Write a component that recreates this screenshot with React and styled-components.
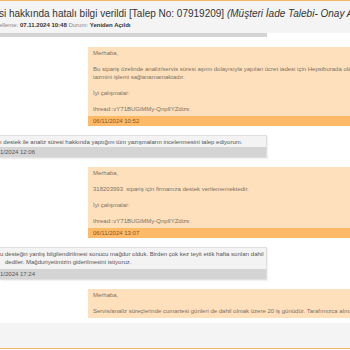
import React from "react";
import styled, { createGlobalStyle } from "styled-components";

const GlobalStyle = createGlobalStyle`
  html, body {
    margin: 0;
    padding: 0;
    background: #fff;
    overflow: hidden;
  }
  body {
    font-family: "Liberation Sans", Arial, sans-serif;
  }
`;

const Modal = styled.div`
  width: 350px;
  height: 347px;
  display: flex;
  flex-direction: column;
  border-top: 1px solid #f2b766;
  border-bottom: 1px solid #f2b766;
  overflow: hidden;
`;

const Header = styled.div`
  height: 31px;
  flex: none;
  background: #f4f4f4;
  padding-top: 7px;
  box-sizing: border-box;
  white-space: nowrap;
  position: relative;
  z-index: 2;
  box-shadow: 0 1px 1px rgba(0, 0, 0, 0.04);
`;

const Title = styled.div`
  font-size: 10px;
  line-height: 12px;
  color: #333;
  margin-left: -1px;

  em {
    font-style: italic;
  }
`;

const Meta = styled.div`
  font-size: 6px;
  line-height: 8px;
  color: #888;
  margin-top: 1px;
  margin-left: -1px;

  b {
    color: #333;
    font-weight: bold;
  }
`;

const Body = styled.div`
  flex: 1;
  overflow: hidden;
  background: #fff;
  display: flex;
  flex-direction: column;
  gap: 9px;
`;

const Tail = styled.div`
  width: 267px;
  height: 4px;
  background: #d4d4d4;
  margin-top: 1px;
  margin-bottom: 1px;
  flex: none;
`;

const Bubble = styled.div`
  flex: none;
  box-sizing: border-box;
  white-space: nowrap;
  font-size: 6px;
  line-height: 8px;
  ${({ $mine }) =>
    $mine
      ? `
    margin-left: 88px;
    width: 420px;
    background: #ffe0bd;
    color: #7d7160;
    padding-top: 2px;
  `
      : `
    width: 267px;
    background: #f3f3f3;
    color: #555;
    border: 1px solid #e0e0e0;
    border-left: none;
    padding-top: 2px;
    box-shadow: 1px 1px 1px rgba(0, 0, 0, 0.05);
  `}
`;

const Para = styled.p`
  margin: 0 0 8px;
  padding-left: ${({ $indent }) => $indent ?? 5}px;

  &:last-of-type {
    margin-bottom: 3px;
  }
`;

const Line = styled.div`
  padding-left: ${({ $indent }) => $indent ?? 5}px;
`;

const Stamp = styled.div`
  height: 10px;
  line-height: 10px;
  font-size: 6px;
  padding-left: ${({ $indent }) => $indent ?? 5}px;
  background: ${({ $mine }) => ($mine ? "#ffba68" : "#d4d4d4")};
  color: ${({ $mine }) => ($mine ? "#8a5420" : "#555")};
`;

const Footer = styled.div`
  height: 25px;
  flex: none;
  background: #f4f4f4;
`;

const THREAD = "thread::vY71BUGiMMy-QnplIYZdizs:";

export default function App() {
  return (
    <>
      <GlobalStyle />
      <Modal>
        <Header>
          <Title>
            si hakkında hatalı bilgi verildi [Talep No: 07919209]{" "}
            <em>(Müşteri İade Talebi- Onay Aşamasında)</em>
          </Title>
          <Meta>
            elleme: <b>07.11.2024 10:48</b> Durum: <b>Yeniden Açıldı</b>
          </Meta>
        </Header>
        <Body>
          <Tail />
          <Bubble $mine>
            <Para>Merhaba,</Para>
            <Para>
              Bu sipariş özelinde analiz/servis süresi aşımı dolayısıyla yapılan ücret iadesi
              için Hepsiburada olarak
              <br />
              tazmini işlemi sağlanamamaktadır.
            </Para>
            <Para>İyi çalışmalar:</Para>
            <Para>{THREAD}</Para>
            <Stamp $mine>06/11/2024 10:52</Stamp>
          </Bubble>
          <Bubble>
            <Line $indent={-1}>
              ı destek ile analiz süresi hakkında yaptığım tüm yazışmaların incelenmesini talep
              ediyorum.
            </Line>
            <Stamp $indent={-2} style={{ marginTop: 1 }}>
              1/2024 12:06
            </Stamp>
          </Bubble>
          <Bubble $mine>
            <Para>Merhaba,</Para>
            <Para>318203993&nbsp; sipariş için firmanıza destek verilememektedir.</Para>
            <Para>İyi çalışmalar:</Para>
            <Para>{THREAD}</Para>
            <Stamp $mine>06/11/2024 13:07</Stamp>
          </Bubble>
          <Bubble>
            <Line $indent={-1}>
              u desteğin yanlış bilgilendirilmesi sonucu mağdur olduk. Birden çok kez teyit ettik
              hafta sonları dahil
            </Line>
            <Line>dediler. Mağduriyetimizin giderilmesini istiyoruz.</Line>
            <Stamp $indent={-2} style={{ marginTop: 3 }}>
              1/2024 17:24
            </Stamp>
          </Bubble>
          <Bubble $mine>
            <Para>Merhaba,</Para>
            <Para>
              Servis/analiz süreçlerinde cumartesi günleri de dahil olmak üzere 20 iş günüdür.
              Tarafımızca alınabilecek bir aksiyon bulunmamaktadır.
            </Para>
          </Bubble>
        </Body>
        <Footer />
      </Modal>
    </>
  );
}
